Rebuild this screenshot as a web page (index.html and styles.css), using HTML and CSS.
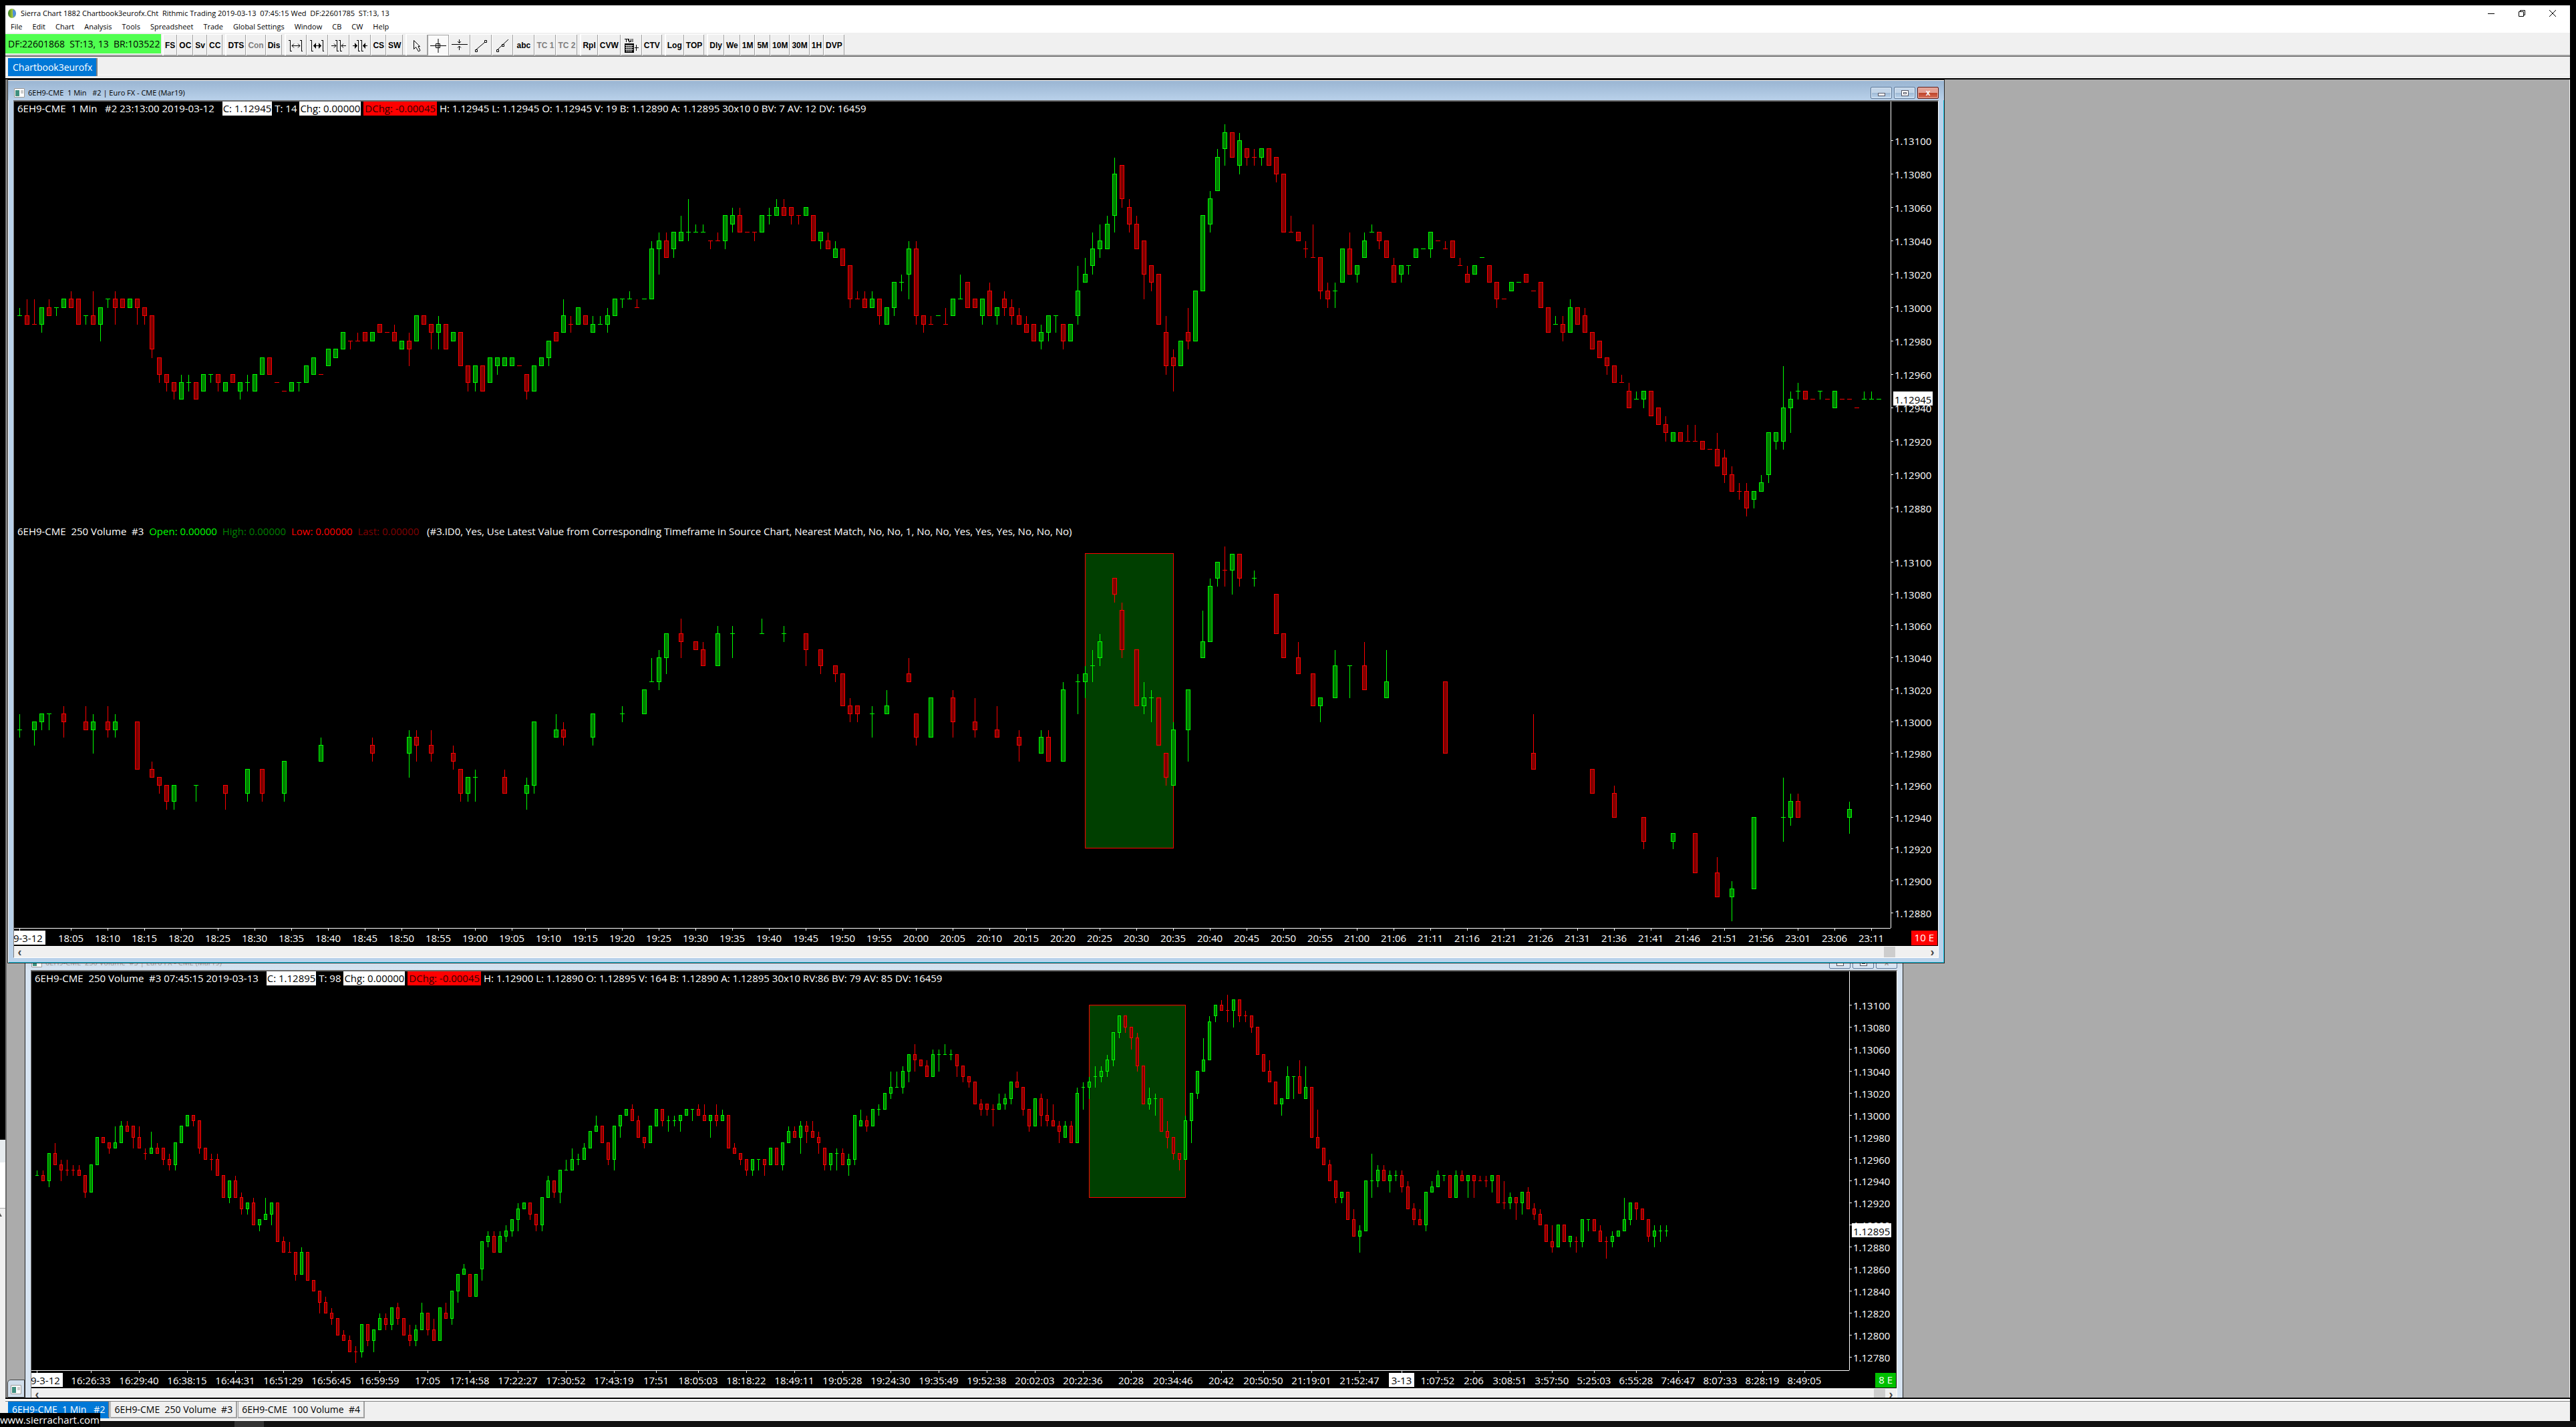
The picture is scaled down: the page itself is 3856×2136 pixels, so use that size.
FILE: index.html
```html
<!DOCTYPE html>
<html lang="en">
<head>
<meta charset="utf-8">
<title>Sierra Chart 1882 Chartbook3eurofx.Cht</title>
<link rel="stylesheet" href="styles.css">
</head>
<body>
<div class="behind" aria-hidden="true"><svg width="4" height="6"><path d="M0 0l3 5H0z" fill="#555"/></svg></div>

<main class="app">
  <header class="titlebar">
    <svg class="app-icon" width="14" height="16" viewBox="0 0 14 16"><defs><linearGradient id="globe" x1="0" y1="0" x2="1" y2="0"><stop offset="0" stop-color="#2f7d1e"/><stop offset=".55" stop-color="#a9c93a"/><stop offset="1" stop-color="#3f7fd0"/></linearGradient></defs><ellipse cx="7" cy="8" rx="6" ry="7" fill="url(#globe)"/><path d="M8 2q4 2 4 6-1 4-4 6 1-3 0-6z" fill="#4f8fe0"/></svg>
    <h1>Sierra Chart 1882 Chartbook3eurofx.Cht&nbsp; Rithmic Trading 2019-03-13&nbsp; 07:45:15 Wed&nbsp; DF:22601785&nbsp; ST:13, 13</h1>
    <div class="caption">
      <button aria-label="Minimize"><svg width="12" height="12"><path d="M1 6.5h10"/></svg></button>
      <button aria-label="Restore"><svg width="12" height="12"><path d="M1.500 3.500h7v7h-7zM3.500 3.500v-2h7v7h-2"/></svg></button>
      <button aria-label="Close"><svg width="12" height="12"><path d="M1 1l10 10M11 1L1 11"/></svg></button>
    </div>
  </header>
  <nav class="menu">
    <button>File</button><button>Edit</button><button>Chart</button><button>Analysis</button><button>Tools</button><button>Spreadsheet</button><button>Trade</button><button>Global Settings</button><button>Window</button><button>CB</button><button>CW</button><button>Help</button>
  </nav>
  <div class="toolbar">
    <output class="feed">DF:22601868&nbsp; ST:13, 13&nbsp; BR:103522</output>
    <div class="group"><button>FS</button><button>OC</button><button>Sv</button><button>CC</button></div>
    <div class="group"><button>DTS</button><button disabled>Con</button><button>Dis</button></div>
    <div class="group">
      <button class="ico" aria-label="Increase spacing"><svg width="24" height="24"><path d="M3.500 4v17M20.500 4v17M1 4.500h3M4 20.500h2M18 4.500h2M20 20.500h2M6 12.500h12M9 9.500l-3 3 3 3M15 9.500l3 3-3 3"/></svg></button>
      <button class="ico" aria-label="Increase bar width"><svg width="24" height="24"><path d="M3.500 4v17M20.500 4v17M1 4.500h3M4 20.500h2M18 4.500h2M20 20.500h2M6 12.500h12"/><path class="solid" d="M10 8v9l-4-4.500zM14 8v9l4-4.500z"/></svg></button>
      <button class="ico" aria-label="Decrease spacing"><svg width="24" height="24"><path d="M9.500 4v17M14.500 4v17M7 4.500h2M10 20.500h2M12 4.500h2M15 20.500h2M1 12.500h7M16 12.500h7M5 9.500l3 3-3 3M19 9.500l-3 3 3 3"/></svg></button>
      <button class="ico" aria-label="Decrease bar width"><svg width="24" height="24"><path d="M9.500 4v17M14.500 4v17M7 4.500h2M10 20.500h2M12 4.500h2M15 20.500h2M1 12.500h7M16 12.500h7"/><path class="solid" d="M4 8v9l4-4.500zM20 8v9l-4-4.500z"/></svg></button>
      <button>CS</button><button>SW</button>
    </div>
    <div class="group">
      <button class="ico" aria-label="Pointer"><svg width="24" height="24"><path d="M7.500 4.500v13l3-3 4 6.500 2.500-1.500-3-6h2.500l-3-3z"/></svg></button>
      <button class="ico pressed" aria-label="Crosshair"><svg width="26" height="24"><path d="M1 12.500h24M13 2v21M9.500 9.500h6v6h-6z"/></svg></button>
      <button class="ico" aria-label="Horizontal line"><svg width="26" height="24"><path d="M1 10.500h24M12.500 3v5M10 6l2.500 2.500L15 6M12.500 13v6M10 15.500l2.500-2.500 2.500 2.500"/></svg></button>
      <button class="ico" aria-label="Line"><svg width="24" height="24"><path d="M5 18L18 7M3.500 18.500h3v3h-3zM17.500 4.500h3v3h-3z"/></svg></button>
      <button class="ico" aria-label="Ray"><svg width="24" height="24"><path d="M5 18L21 3M3.500 18.500h3v3h-3zM11.500 10.500h3v3h-3z"/></svg></button>
      <button class="ico">abc</button><button disabled>TC 1</button><button disabled>TC 2</button>
    </div>
    <div class="group"><button>Rpl</button><button>CVW</button>
      <button class="ico" aria-label="Trade window"><svg width="26" height="26"><path d="M4 3.500h5M6.500 3v5M10.500 3v5h1l1-2 1 2v-5M16 3v5M9.500 3v3"/><path class="solid" d="M4 10h14v14H4z"/><path class="mesh" d="M5 13.500h12M5 16.500h12M5 19.500h12M7.500 12v11M10.500 12v11M13.500 12v11"/><path d="M19 16.500h6M21.500 12v9"/></svg></button>
      <button>CTV</button></div>
    <div class="group"><button>Log</button><button>TOP</button></div>
    <div class="group"><button>Dly</button><button>We</button><button>1M</button><button>5M</button><button>10M</button><button>30M</button><button>1H</button><button>DVP</button></div>
  </div>
  <div class="books"><button class="tab active">Chartbook3eurofx</button></div>

  <div class="mdi">
    <section class="win win-back">
      <header class="wtitle">
        <svg class="doc" width="16" height="14"><rect width="16" height="14" fill="#fff"/><path d="M.5.500h15v13H.500z" fill="none" stroke="#999"/><path d="M2 3h6v9H2z" fill="#3f8f7f"/><path d="M10 3h4v5h-4z" fill="#ccc"/></svg>
        <h2>6EH9-CME&nbsp; 250 Volume&nbsp; #3 | Euro FX - CME (Mar19)</h2>
        <div class="wbtns"><button aria-label="Minimize"><i class="min"></i></button><button aria-label="Maximize"><i class="max"></i></button><button aria-label="Close">x</button></div>
      </header>
      <div class="client">
        <div class="pane pane-full">
          <div class="plot">
            <p class="info">6EH9-CME&nbsp; 250 Volume&nbsp; #3 07:45:15 2019-03-13 <span class="last close-price">C: 1.12895</span> T: 98 <span class="last">Chg: 0.00000</span> <span class="down">DChg: -0.00045</span> H: 1.12900 L: 1.12890 O: 1.12895 V: 164 B: 1.12890 A: 1.12895 30x10 RV:86 BV: 79 AV: 85 DV: 16459</p>
            <svg class="candles" id="volume-chart"></svg>
          </div>
          <svg class="prices" id="volume-prices"></svg>
        </div>
        <div class="times"><svg class="scale" id="volume-times"></svg><span class="badge ok">8 E</span></div>
        <div class="scroll"><button aria-label="Scroll left">‹</button><span class="thumb"></span><button aria-label="Scroll right">›</button></div>
      </div>
    </section>

    <section class="win win-front">
      <header class="wtitle">
        <svg class="doc" width="16" height="14"><rect width="16" height="14" fill="#fff"/><path d="M.5.500h15v13H.500z" fill="none" stroke="#999"/><path d="M2 3h6v9H2z" fill="#3f8f7f"/><path d="M10 3h4v5h-4z" fill="#ccc"/></svg>
        <h2>6EH9-CME&nbsp; 1 Min&nbsp;&nbsp; #2 | Euro FX - CME (Mar19)</h2>
        <div class="wbtns"><button aria-label="Minimize"><i class="min"></i></button><button aria-label="Maximize"><i class="max"></i></button><button class="close" aria-label="Close">x</button></div>
      </header>
      <div class="client">
        <div class="pane pane-upper">
          <div class="plot">
            <p class="info">6EH9-CME&nbsp; 1 Min&nbsp;&nbsp; #2 23:13:00 2019-03-12 <span class="last close-price">C: 1.12945</span> T: 14 <span class="last">Chg: 0.00000</span> <span class="down">DChg: -0.00045</span> H: 1.12945 L: 1.12945 O: 1.12945 V: 19 B: 1.12890 A: 1.12895 30x10 0 BV: 7 AV: 12 DV: 16459</p>
            <svg class="candles" id="minute-chart"></svg>
          </div>
          <svg class="prices" id="minute-prices"></svg>
        </div>
        <div class="pane pane-lower">
          <div class="plot">
            <p class="info">6EH9-CME&nbsp; 250 Volume&nbsp; #3&nbsp; <span class="c-open">Open: 0.00000</span>&nbsp; <span class="c-high">High: 0.00000</span>&nbsp; <span class="c-low">Low: 0.00000</span>&nbsp; <span class="c-last">Last: 0.00000</span>&nbsp;&nbsp; (#3.ID0, Yes, Use Latest Value from Corresponding Timeframe in Source Chart, Nearest Match, No, No, 1, No, No, Yes, Yes, Yes, No, No, No)</p>
            <svg class="candles" id="overlay-chart"></svg>
          </div>
          <svg class="prices" id="overlay-prices"></svg>
        </div>
        <div class="times"><svg class="scale" id="minute-times"></svg><span class="badge alert">10 E</span></div>
        <div class="scroll wide"><button aria-label="Scroll left">‹</button><span class="thumb"></span><button aria-label="Scroll right">›</button></div>
      </div>
    </section>

    <div class="minimized"><svg class="doc" width="16" height="14"><rect width="16" height="14" fill="#fff"/><path d="M.5.500h15v13H.500z" fill="none" stroke="#999"/><path d="M2 3h6v9H2z" fill="#3f8f7f"/><path d="M10 3h4v5h-4z" fill="#ccc"/></svg></div>
  </div>

  <div class="charts">
    <button class="tab active">6EH9-CME&nbsp; 1 Min&nbsp;&nbsp; #2</button><button class="tab">6EH9-CME&nbsp; 250 Volume&nbsp; #3</button><button class="tab">6EH9-CME&nbsp; 100 Volume&nbsp; #4</button>
  </div>
</main>
<footer class="taskbar"><span class="task"></span></footer>
<a class="url" href="http://www.sierrachart.com">www.sierrachart.com</a>
<script src="script.js"></script>
</body>
</html>
```
FILE: styles.css
```css
* { box-sizing: border-box; }
body {
  margin: 0;
  min-height: 100vh;
  display: flex;
  flex-direction: column;
  position: relative;
  background: #000;
  color: #000;
  font: 15px/21px "Open Sans", "Noto Sans", sans-serif;
  overflow: hidden;
}
h1, h2, p { margin: 0; font-weight: 400; }
button { font: inherit; color: inherit; border: 0; margin: 0; padding: 0; background: none; white-space: nowrap; }
svg { display: block; }

.app { flex: 1; margin: 8px 9px 0 8px; display: flex; flex-direction: column; background: #f0f0f0; }

/* main window caption and menu */
.titlebar { display: flex; align-items: center; gap: 6px; height: 23px; padding-left: 3px; background: #fff; }
.titlebar h1 { flex: 1; font-size: 11px; line-height: 16px; }
.caption { display: flex; gap: 2px; padding-right: 4px; }
.caption button { width: 44px; height: 20px; display: grid; place-items: center; }
.caption path { fill: none; stroke: #000; }
.menu { display: flex; height: 18px; background: #fff; font-size: 11px; line-height: 18px; }
.menu button { padding: 0 7px 0 8px; }

/* toolbar */
.toolbar { display: flex; height: 36px; padding-top: 2px; border-bottom: 1px solid #696969; box-shadow: inset 0 -2px #a0a0a0; }
.feed { width: 233px; height: 29px; margin-right: 2px; padding-left: 4px; background: #50ff50; font-size: 14px; line-height: 30px; white-space: nowrap; }
.group { display: flex; height: 32px; margin-right: 4px; border-left: 1px solid #fff; border-top: 1px solid #fff; font: bold 12px/30px "Liberation Sans", Arial, sans-serif; }
.group button { padding: 0 2px 0 3px; border-right: 1px solid #a0a0a0; box-shadow: inset 1px 0 #fff; }
.group button:disabled { color: #808080; }
.group .ico { width: 32px; padding: 0; display: grid; place-items: center; }
.group .pressed { background: #fafafa; box-shadow: inset 1px 1px #a0a0a0; }
.ico path { fill: none; stroke: #000; }
.ico .solid { fill: #000; stroke: none; }
.ico .mesh { stroke: #f0f0f0; }

/* tabs */
.tab { height: 25px; padding: 0 4px; border: 1px solid #a0a0a0; border-width: 0 2px 2px 1px; font-size: 14px; line-height: 22px; }
.tab.active { background: #0078d7; color: #fff; border-color: #0078d7 #808080 #0078d7 #0078d7; }
.books { height: 34px; padding: 2px 4px 0; border-bottom: 2px solid #000; background: linear-gradient(#f0f0f0 27px, #fff 27px, #fff 28px, #e3e3e3 28px, #e3e3e3 29px, #f0f0f0 29px); }
.books .tab { height: 27px; padding: 0 6px; line-height: 27px; border-bottom: 0; }
.charts { display: flex; align-items: flex-start; gap: 1px; height: 35px; padding: 3px 4px; border-top: 2px solid #000; background: linear-gradient(#fff 3px, #808080 3px, #808080 4px, #f0f0f0 4px, #f0f0f0 32px, #fff 32px); }
.charts .tab { margin-top: 1px; padding: 0 5px; }

/* workspace */
.mdi { flex: 1; position: relative; overflow: hidden; background: #ababab; border-left: 2px solid #696969; border-right: 1px solid #fff; }
.win { position: absolute; padding: 0 8px 7px; border: 1px solid #222; background: #b9d1ea; }
.win-front { left: 1px; top: 0; width: 2900px; box-shadow: inset 1px 1px #fff, inset -1px -1px #17c8e6; }
.win-back { left: 27px; top: 1302px; width: 2812px; background: #d7e4f2; }
.wtitle { display: flex; align-items: center; gap: 5px; height: 30px; margin: 0 -8px; padding: 8px 8px 0 9px; background: linear-gradient(#99b4d1, #b9d1ea); }
.win-front .wtitle { box-shadow: inset 0 1px #fff; }
.win-back .wtitle { background: linear-gradient(#bfcddb, #d7e4f2); color: #999; }
.wtitle h2 { flex: 1; font-size: 11px; line-height: 18px; }
.wbtns { display: flex; gap: 3px; }
.wbtns button { width: 32px; height: 18px; display: grid; place-items: center; border: 1px solid #5b7697; border-radius: 2px; background: linear-gradient(#c3d5e8 50%, #9db8d4 50%, #bfd7ee); box-shadow: inset 0 0 0 1px #dce9f6; font: bold 12px/14px "Liberation Sans", Arial, sans-serif; }
.win-back .wbtns button { background: #d7e4f2; }
.wbtns .close { border-color: #5b1410; background: linear-gradient(#e3a195 50%, #bc4126 50%, #d8725c); box-shadow: inset 0 0 0 1px #eab3a8; color: #fff; }
.min { width: 11px; height: 5px; margin-top: 4px; background: #fff; border: 1px solid #535666; }
.max { width: 11px; height: 9px; background: #fff; border: 1px solid #535666; box-shadow: inset 0 0 0 2px #fff, inset 0 0 0 3px #535666; }
.client { border: 1px solid #fff; border-top: 2px solid #696969; border-left-color: #808080; background: #000; color: #fff; }

/* chart panes */
.pane { display: flex; }
.pane-upper { height: 633px; }
.pane-lower { height: 604px; }
.pane-full { height: 597px; }
.plot { flex: 1; min-width: 0; display: flex; flex-direction: column; }
.info { height: 21px; padding-left: 5px; white-space: nowrap; }
.last, .down { display: inline-block; padding: 0 1px; background: #fff; color: #000; }
.close-price { margin-left: 8px; }
.down { padding: 0 2px; background: #f00; color: #300; }
.c-open { color: #0f0; }
.c-high { color: #007f00; }
.c-low { color: #f00; }
.c-last { color: #7f0000; }
.candles { flex: 1; width: 100%; min-height: 0; shape-rendering: crispEdges; }
.prices { width: 71px; height: 100%; }
.axis { stroke: #fff; shape-rendering: crispEdges; }
.label { fill: #fff; }
.mark { fill: #fff; }
.mark-label { fill: #000; }
.up-wick, .up-body { stroke: #0f0; }
.down-wick, .down-body { stroke: #f00; }
.up-body { fill: #007f00; }
.down-body { fill: #7f0000; }
.up-wick, .down-wick { fill: none; }
.zone { fill: #003f00; stroke: #f00; }
.times { display: flex; justify-content: space-between; height: 27px; }
.scale { flex: 1; height: 27px; }
.times .label, .times .mark-label { text-anchor: middle; }
.badge { height: 22px; margin: 4px 1px 0 30px; padding: 0 5px; }
.badge.alert { background: #f00; }
.badge.ok { background: #00c000; }
.scroll { display: flex; height: 17px; background: #f0f0f0; color: #444; border-top: 1px solid #fff; }
.scroll button { width: 17px; font: bold 18px/12px "Liberation Sans", Arial, sans-serif; }
.thumb { width: 17px; margin-left: auto; background: #cdcdcd; }
.wide .thumb { margin-right: 47px; }
.minimized { position: absolute; left: 1px; bottom: 0; width: 26px; height: 27px; padding: 7px 4px; border: 1px solid #444; border-radius: 5px 0 0 0; background: #d0deec; }

/* things around the main window */
.taskbar { height: 9px; padding-left: 351px; background: #111; }
.task { display: block; width: 44px; height: 9px; background: #333; }
.url { position: absolute; left: 0; bottom: 0; height: 21px; padding-right: 1px; background: #000; color: #fff; text-decoration: none; }
.behind { position: absolute; left: 0; top: 1706px; bottom: 21px; width: 8px; padding-top: 110px; background: linear-gradient(#e6ebee 34px, #fff 34px, #fff 102px, #aaa 102px, #aaa 103px, #f0f0f0 103px); }
```
FILE: script.js
```js
// Bars are written as colour, body top[:bottom], ^high, vlow, all counted in
// ticks of 0.00005 below 1.13100. A leading number with "#" sets the bar index.
const MINUTE = `g21^20 r21:22^19 r22^19 g20:22v23 r20:21^19 g20v21 g19:20 r19:20^18 r19:22 g21v22
r21:22^18 g20:22v24 g19v20 r19:20^18v22 r19:20 g19:20 r19:20v22 r20:21v22 r21:25v26 r26:28v29
r28:29v30 r29:30v31 g29:31^28 g29^28v30 r29:31 g28:30 g28v29 r28:29v30 g29:30 r28:29
g29:30v31 g29^28v30 g28:30 g26:28 r26:28 r29 r30 g29:30 g29v30 g27:29
g26:28 r28 g25:27 g25:26 g23:25 r24v25 r24^23 r23:24 g23:24 r22:23
r23 r23:24^22 g24:25 r24:25^23v27 g21:24 r21:22 r22:23v25 g22:23^21v25 r22:25 g23:24
r23:27 r27:29v30 g27:29v30 r27:30 g26:29 g26:27v28 g26:27 g26:27 r27 r28:30v31
g27:30 g26:27 g24:26v27 r23:24 g21:23^19 r22^21v23 g20:22 r21:22 g22:23^21 g22^21
g21:22^20v23 g19:21 g19v20 g19^18 r20^19 g19 g13:19^12 g12:13^11v16 r12:14^11 g11:13v14
g11:12^9 g11^7v12 g11^10 g11^10 r12v13 r12^11 g9:12v13 g9:10^8v11 r9:11^8 r11
r11v12 g9:11 g9^8v10 g8:9^7 r8:9^7 r8:9v10 r9v10 g8:9 r9:12 g11:12v13
r12:13^11 g13:14^12 r13:15 r15:19v20 r19^18 r19:20^18 g19:20^18 r19:21v22 g20:22 g17:20v21
g17^16v18 g13:16^12v19 r13:21^12v22 r21:22v23 r22^21 g21 r22^20 g19:21 g19^16 r17:20
r19:20 g19:21v22 r18:21^17 g20:21v22 r19:20^18v21 r20:21^19v22 r21:22^20 r22:23^21 r22:24 g23:24^22v25
g21:23v24 g21v23 r22:24v25 g22:24 g18:21^15v22 g16:17^14 g13:15^11v16 g12:13^10v14 g10:13^9 g4:9^2v11
r3:7v8 r8:10^7v11 r10:13^9 r12:16v19 r15:17v18 r16:22 r23:27^21v28 r26:27^25v30 g24:27 r23:24^20v25
g18:24 g9:18 g7:10^6v11 g2:6^1 g-1:1^-2v3 r-1:2 g0:3^-1v4 r1:2v3 r2^1v3 g1:2v3
r1:3 r2:4v5 r4:11 r11^9 r11:12 r13^12v14 r14^10 r14:18v19 r18:19^17v20 g18^17v20
g13:17 r13:16^11 g15:16v17 g12:14^11 g11^10 r11:12v13 r12:14 r15:17^14 g15:16v17 g15v16
g13:14 g13 g11:13v14 r12 r13^12 r12:14 r15^14 r16:17^15 g15:16 g14
r15:17 r17:19v20 r19 g17:18 g17 r16:17 r18 r17:20 r20:23 g22^21
r22:23^21v24 g20:23^19 r20:22 r21:23^20 r23:25 r24:26 r26:27v28 r27:29 r29^28 r30:32^29
g31^30 g30:31v32 r30:33 r32:34 r34:35^33v36 g35:36 r35:36 r36^34 r36^34 r36:37
r37 r37:39^35 r38:40^37v41 r40:42^39 r42^41v43 r42:44^41v45 g42:43v44 g41:42^40 g35:40v41 g35:36v37
g32:36^27v37 g31:32^30v35 g30^29v31 r30:31 r31 g30v31 r31 g30:32 r31 r31
r32 g31^30 g31^30 g31`;

const OVERLAY = `0#g21^19v22 2#g20:21v23 g19:20v21 g19v21 6#r19:20^18v22 9#r20:21^18 g20:21^19v24
12#r20:21^18v22 g20:21^19v22 16#r20:26 18#r26:27^25 r27:28v29 r28:30v31 g28:30v31 24#g28v30
28#r28:29v31 31#g26:29v30 33#r26:29v30 36#g25:29v30 41#g23:25^22 48#r23:24^22v25 53#g22:24^21v27
r22:23^21v25 56#r23:24^21v25 59#r24:25^23v26 r26:29v30 g27:29v30 g27^26v30 66#r27:29^26
69#g28:29^27v31 g20:28v29 73#g21:22^19 r21:22^20v23 78#g19:22v23 82#g19^18v20 85#g16:19 g15^12
g12:15^11v16 g9:12v14 90#r9:10^7v12 92#r10:11 r11:13^10 95#g9:13^8 97#g9^8v12 101#g9^7
104#g9^8v10 107#r9:11v13 109#r11:13v14 111#r13:14v15 r14:18 r18:19^17v20 r18:19v20 116#g19^18v22
118#g18:19^16 121#r14:15^12 r19:22v23 124#g17:22 127#r17:20^16v22 130#r20:21^17v22 133#r21:22^18
136#r22:23^21v25 139#g22:24^21 r22:25^21 142#g16:25^15 144#g15^14v19 g14:15^13v17 g13^11v15
g10:12^9v13 149#r2:4v5 r6:11^5v12 152#r11:18 g17:18^15v19 g17^16v20 r17:23 r24:27v28 g21:28^20
159#g16:21v25 161#g10:12^6 g3:10^2 g0:2v3 r1^-2v3 g-1:1v4 r-1:2v3 168#g2^1v3 171#r4:9 r9:12
174#r12:14^10 176#r14:18 g17:18v20 179#g13:17^11 181#g13v17 183#r13:16^10 186#g15:17^11
194#r15:24 206#r24:26^19 214#r26:29 217#r29:32^28 221#r32:35v36 225#g34:35v36 228#r34:39
231#r39:42^37 233#g41:42^40v45 236#g32:41 240#g32^27v35 g30:32^29v33 r30:32^29 249#g31:32^30v34`;

const VOLUME = `g31^30 r31:32^30 g27:32v33 r27:29^25 r29:30^28v32 r30^28v31 r30^29v31 r30:31^29 r31:34v35 g29:34
g24:29 r24:25 r25:26v27 g25:26^22 g22:25^21 r22:23^21 r22:24v26 r24:26^22 r27^26v28 g26:27^23
r26:27^25 r26:28v29 r28:29^27v30 g25:29v30 g22:25 g20:22 r20:21v22 r21:26v27 r26:28 r28^27v30
r28:31^27 r31:35 g32:35v36 r32:35^31 r35:37^34v38 g36:37v38 r36:40^35 g39:40v41 g38:39^35 g36:38v40
r36:43 r43:45^42 r45^43 r45:49v50 g45:49^44 r45:50 r50:52 r52:54v56 r54:56^53 r56:57^55v58
r57:60 r60:61^59 r61:63^60 r63^62v65 g58:63v64 r58:61v62 g59:61v63 g57:59^56 r57:58^56v59 g55:58v59
r55:57^54v58 r57:60 r60:61^58v62 g59:61^58v62 g56:59^54 r56:59v60 r59:61^57 g55:61 r56:57^54 g52:57v58
g49:52v54 g48:49^47 r49:53 g49:53 g43:48v50 g42:43^41v44 r42:45^41 g42:45^41 g41:42^40v43 g39:41v42
g37:39^36v41 g36:37 r36:38v39 r38:40v41 g35:40v41 g32:35^31 r32:34v35 g30:34v36 g30^28 g28:30^26
g28^27v29 g26:28^25 g23:26 g22:23^20 r22:25 r25:28v29 g22:28v30 g20:22v24 g19:20 r19:21^18
r21:24^20 r24:25v26 g22:25 g19:22 r19:21v22 g21^20v23 g21^20v22 g20:21v23 g19:20 g19v21
r19:20^18 r20:21^18 g20:21v24 r20:21^18v22 g20:21^19 r20:26 r26:27^25 r27:28v29 r28:30v31 g28:30v31
g28v30 r28:29v31 g26:29 r26:29 g25:29v30 g23:25^22 r23:24^22 g22:24^21v27 r22:23^21v25 r23:24^21
r24:25^23v27 r26:29v30 g27:29v30 g27^26v30 r27:29^26 g28:29^27v31 g20:28v29 g21:22^19 r21:22^20v23 g19:22
g19^18v20 g16:19 g15:16^12v17 g15^12 g12:15^11v16 g9:12v14 r9:10^7v12 r10:11 r11:13^10 g9:13^8
g9^8v12 g9^7 g9^8v10 r9:11v13 r11:13v14 r13:14v15 r14:18 r18:19^17v20 r18:19v20 r19^18v22
g18:19^16 g17:18^16v19 g14:17v18 r14:15^12 r15:19v20 r19:22v23 g17:22 r17:20^16v22 r20:21^17v22 r21:22^18
r22:23^21v25 g22:24^21 r22:25^21 g16:25^15 g15^14v19 g14:15^13v17 g13^11v15 g12:13^11v14 g10:12^9v13 g5:10v11
g2:5v6 r2:4v5 r4:6v8 r6:11^5v12 r11:18 g17:18^15v19 g17^16v20 r17:23 r23:24^21v26 r24:27v28
r27:28v30 g21:28^20 g16:21v25 g12:16v17 g10:12^6 g3:10^2 g0:2v3 r0:1^-1 r1^-2v3 g-1:1v4
r-1:2v3 r2^1v3 r2:4v5 r4:9 r9:12 r12:14^10 r14:18 g17:18v20 g13:17^11 g13v17
r13:16^10 g15:17^11 r15:24 r24:26^19 r26:29 r29:32^28 r32:35v36 g34:35v36 r34:39 r39:42^37
g41:42^40v45 g32:41 g32^27v35 g30:32^29v33 r30:32^29 g31:32^30v34 g31^30v32 r31:33^30v34 r33:37^32 r37:39^36v40
r39:40^37 g34:40v41 g33:34^32 g31:33^30 g31v32 r31:35 g31:35^30 r31:32^30 g31:32v35 r31:32v35
r32^31 r32^31v33 g31:32v34 r31:36 r36^32v37 g35:36^34v37 r35:36v39 g34:36v38 r34:37^33 r37:38^36v39
r38:40^37 r40:43 r43:44^40v45 g40:44 r40:43 g42:43v44 r43^42v45 g39:43v44 g39v41 r39:41
r41:43^40 r43^42v46 g42:43^41v44 g41:42 g39:41^35 g36:39v40 r36:37v39 r37:39 r39:42v43 g41:42^40v44
g41^40v43 g41^40v42`;

const NS = "http://www.w3.org/2000/svg";
function add(parent, name, attrs, text) {
  const el = document.createElementNS(NS, name);
  for (const key in attrs) el.setAttribute(key, attrs[key]);
  if (text !== undefined) el.textContent = text;
  parent.appendChild(el);
  return el;
}

const FIRST_BAR = 8;   // distance of the first bar from the left edge
const INFO = 21;       // height of the info line above the bars

function drawBars(id, source, o) {
  const svg = document.getElementById(id);
  const y = k => Math.round(o.top + k * o.tick) - INFO + 0.5;
  const x = i => FIRST_BAR + i * o.step + 0.5;
  if (o.zone) {
    const [a, b, t, l] = o.zone;
    add(svg, "rect", { class: "zone", x: x(a), y: y(t), width: x(b) - x(a), height: y(l) - y(t) });
  }
  const paths = { g: ["", ""], r: ["", ""] };
  let index = -1;
  for (const token of source.trim().split(/\s+/)) {
    const m = token.match(/^(?:(\d+)#)?([gr])(-?\d+)(?::(-?\d+))?(?:\^(-?\d+))?(?:v(-?\d+))?$/);
    index = m[1] === undefined ? index + 1 : +m[1];
    const top = +m[3], bottom = m[4] === undefined ? top : +m[4];
    const c = x(index), p = paths[m[2]];
    if (m[5] !== undefined) p[0] += `M${c} ${y(+m[5])}V${y(top)}`;
    if (m[6] !== undefined) p[0] += `M${c} ${y(bottom)}V${y(+m[6])}`;
    p[1] += top === bottom
      ? `M${c - o.half - 0.5} ${y(top)}h${2 * o.half + 1}`
      : `M${c - o.half} ${y(top)}h${2 * o.half}V${y(bottom)}h${-2 * o.half}z`;
  }
  add(svg, "path", { class: "up-wick", d: paths.g[0] });
  add(svg, "path", { class: "down-wick", d: paths.r[0] });
  add(svg, "path", { class: "up-body", d: paths.g[1] });
  add(svg, "path", { class: "down-body", d: paths.r[1] });
}

function drawPrices(id, o) {
  const svg = document.getElementById(id);
  add(svg, "path", { class: "axis", d: "M.5 0V2000" });
  for (let k = 0; k <= o.last; k += 4) {
    const y = Math.round(o.top + k * o.tick);
    add(svg, "path", { class: "axis", d: `M1 ${y + 0.5}h3` });
    add(svg, "text", { class: "label", x: 6, y: y + 7 }, (1.131 - k * 0.00005).toFixed(5));
  }
  if (o.mark) {
    const y = Math.round(o.top + o.mark * o.tick);
    add(svg, "rect", { class: "mark", x: 4, y: y - 11, width: 59, height: 21 });
    add(svg, "text", { class: "mark-label", x: 6, y: y + 7 }, (1.131 - o.mark * 0.00005).toFixed(5));
  }
}

function drawTimes(id, step, labels, width) {
  const svg = document.getElementById(id);
  add(svg, "path", { class: "axis", d: `M0 .5H${width}` });
  for (const [i, text] of labels) {
    const x = FIRST_BAR + i * step;
    add(svg, "path", { class: "axis", d: `M${x + 0.5} 0v4` });
    const isDate = text.includes("-");
    if (isDate) {
      const half = text.length * 4 + 3;
      add(svg, "rect", { class: "mark", x: x - half, y: 4, width: 2 * half, height: 21 });
    }
    add(svg, "text", { class: isDate ? "mark-label" : "label", x: x, y: 21 }, text);
  }
}

const minute = { top: 58, tick: 12.495, step: 11, half: 3, last: 44, mark: 31 };
const overlay = { top: 56, tick: 11.93, step: 11, half: 3, last: 44, zone: [145, 157, -1.1, 35.87] };
const volume = { top: 50, tick: 8.233, step: 9, half: 2, last: 64, mark: 41, zone: [175, 191, 0, 35] };

drawBars("minute-chart", MINUTE, minute);
drawPrices("minute-prices", minute);
drawBars("overlay-chart", OVERLAY, overlay);
drawPrices("overlay-prices", overlay);
drawBars("volume-chart", VOLUME, volume);
drawPrices("volume-prices", volume);

const minuteLabels = ("18:05 18:10 18:15 18:20 18:25 18:30 18:35 18:40 18:45 18:50 18:55 19:00 19:05 19:10 19:15 19:20 19:25 " +
  "19:30 19:35 19:40 19:45 19:50 19:55 20:00 20:05 20:10 20:15 20:20 20:25 20:30 20:35 20:40 20:45 20:50 20:55 21:00 " +
  "21:06 21:11 21:16 21:21 21:26 21:31 21:36 21:41 21:46 21:51 21:56 23:01 23:06 23:11").split(" ");
drawTimes("minute-times", 11, [[0, "2019-3-12"], ...minuteLabels.map((t, n) => [7 + 5 * n, t])], 2809);

const volumeLabels = ("0 2019-3-12,9 16:26:33,17 16:29:40,25 16:38:15,33 16:44:31,41 16:51:29,49 16:56:45,57 16:59:59,65 17:05," +
  "72 17:14:58,80 17:22:27,88 17:30:52,96 17:43:19,103 17:51,110 18:05:03,118 18:18:22,126 18:49:11,134 19:05:28," +
  "142 19:24:30,150 19:35:49,158 19:52:38,166 20:02:03,174 20:22:36,182 20:28,189 20:34:46,197 20:42,204 20:50:50," +
  "212 21:19:01,220 21:52:47,227 3-13,233 1:07:52,239 2:06,245 3:08:51,252 3:57:50,259 5:25:03,266 6:55:28," +
  "273 7:46:47,280 8:07:33,287 8:28:19,294 8:49:05").split(",").map(s => s.split(" "));
drawTimes("volume-times", 9, volumeLabels.map(([i, t]) => [+i, t]), 2721);
```
